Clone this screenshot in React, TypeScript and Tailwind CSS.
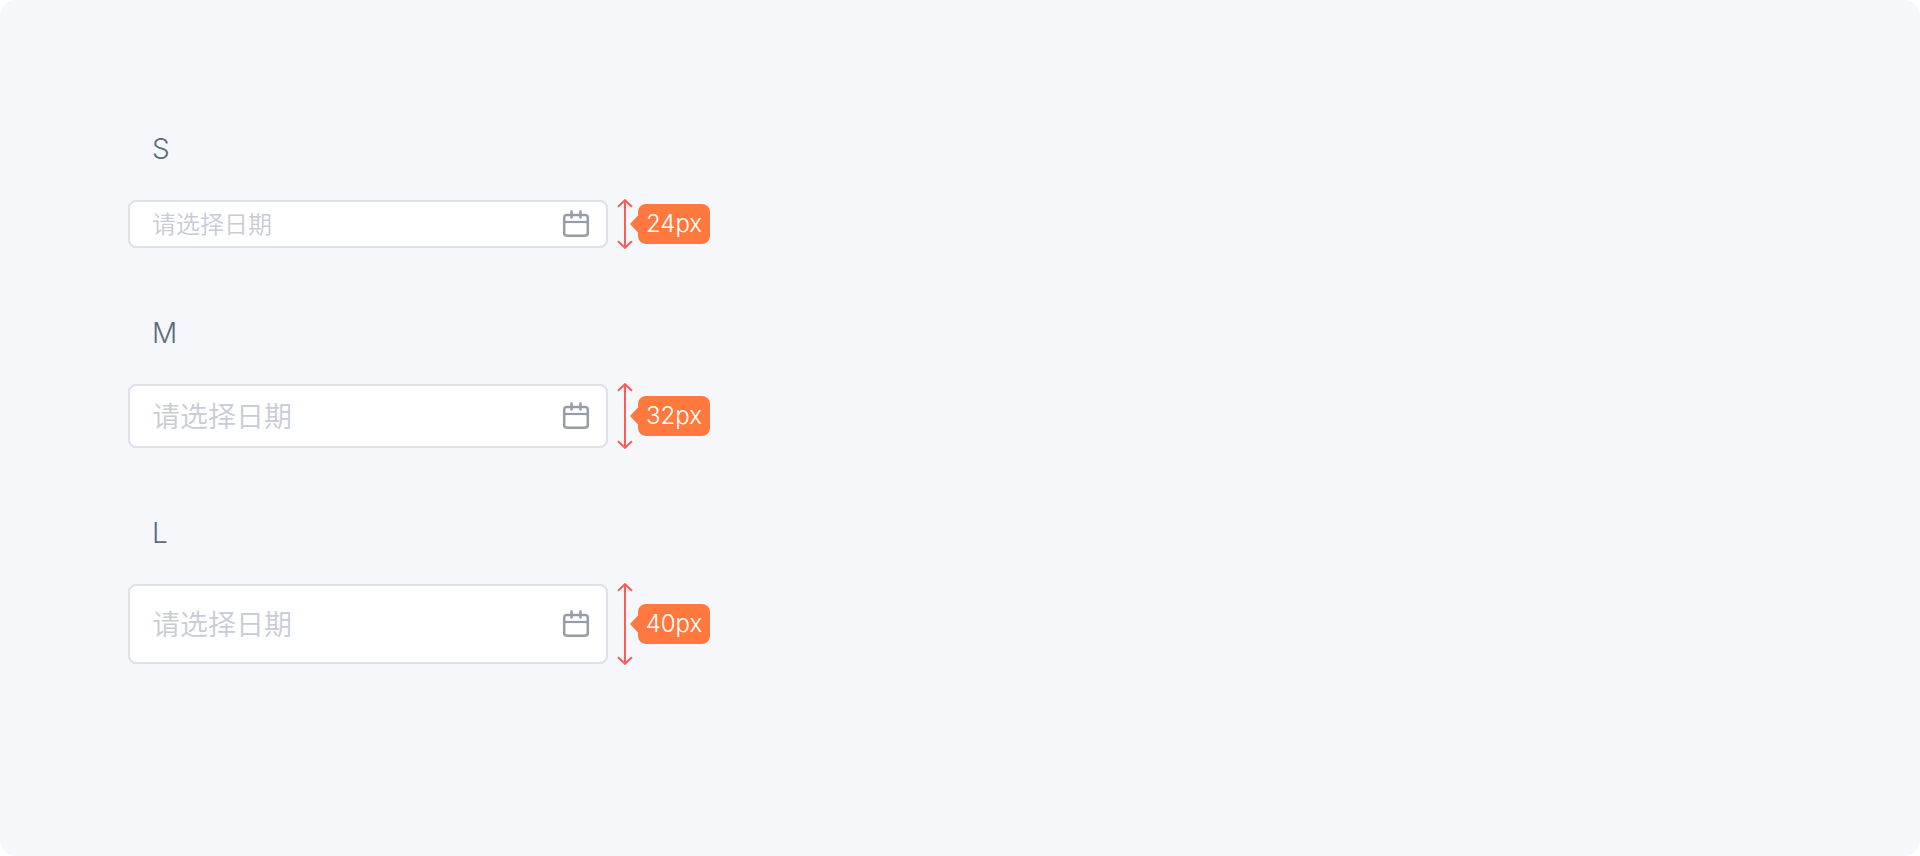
const sizes = [
  { name: 'S', value: '24px', box: 'h-12', text: 'text-2xl', arrow: 50 },
  { name: 'M', value: '32px', box: 'h-16', text: 'text-[28px]', arrow: 66 },
  { name: 'L', value: '40px', box: 'h-20', text: 'text-[28px]', arrow: 82 },
];

function CalendarIcon() {
  return (
    <svg width="28" height="28" viewBox="0 0 28 28" fill="none" stroke="#949ca7" strokeWidth="2.5" aria-hidden="true">
      <rect x="2.2" y="4.9" width="23.6" height="20.8" rx="2.6" />
      <path d="M2 12H26" strokeWidth="2.2" />
      <path d="M9.5 1.4V7.4M18.5 1.4V7.4" strokeLinecap="round" />
    </svg>
  );
}

function HeightArrow({ height }: { height: number }) {
  return (
    <svg
      className="-my-px shrink-0"
      width="18"
      height={height}
      viewBox={`0 0 18 ${height}`}
      fill="none"
      stroke="#ff5a5a"
      strokeWidth="2"
      strokeLinecap="round"
      aria-hidden="true"
    >
      <path d={`M9 1.5V${height - 1.5}M2.6 7.2L9 1.2L15.4 7.2M2.6 ${height - 7.2}L9 ${height - 1.2}L15.4 ${height - 7.2}`} />
    </svg>
  );
}

function SizeTag({ value }: { value: string }) {
  return (
    <div className="flex items-center">
      <svg className="-mx-1 shrink-0" width="12" height="18" viewBox="0 0 12 18" fill="#ff793f" aria-hidden="true">
        <path d="M0.7 9.8Q0 9 0.7 8.2L8.4 0H12V18H8.4Z" />
      </svg>
      <span className="flex h-10 w-18 items-center justify-center rounded-lg bg-[#ff793f] text-2xl text-white">
        {value}
      </span>
    </div>
  );
}

export default function App() {
  return (
    <main className="flex min-h-screen flex-col gap-16 rounded-2xl bg-[#f5f7fb] px-32 py-32 font-['Inter','Noto_Sans_CJK_SC',sans-serif] font-[350]">
      {sizes.map(({ name, value, box, text, arrow }) => (
        <section key={name} className="flex flex-col gap-[30px]">
          <label htmlFor={`date-${name}`} className="self-start pl-6 text-[28px] leading-[42px] text-[#5c6b7e]">
            {name}
          </label>
          <div className="flex items-center gap-2">
            <div
              className={`flex w-full max-w-120 items-center rounded-lg border-2 border-[#dee1e8] bg-white pr-4 pl-[22px] ${box}`}
            >
              <input
                id={`date-${name}`}
                type="text"
                placeholder="请选择日期"
                className={`min-w-0 flex-1 bg-transparent pt-0.5 text-[#5c6b7e] outline-none placeholder:text-[#c7ccd5] ${text}`}
              />
              <button type="button" aria-label="打开日历" className="shrink-0">
                <CalendarIcon />
              </button>
            </div>
            <div className="flex items-center">
              <HeightArrow height={arrow} />
              <SizeTag value={value} />
            </div>
          </div>
        </section>
      ))}
    </main>
  );
}
